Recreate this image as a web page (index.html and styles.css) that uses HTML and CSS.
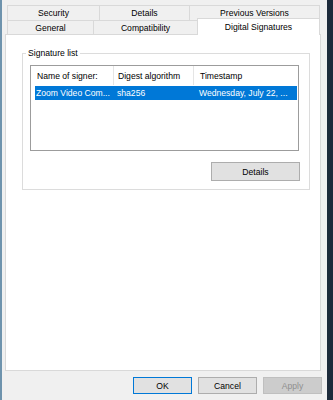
FILE: index.html
```html
<!DOCTYPE html>
<html lang="en">
<head>
    <meta charset="UTF-8">
    <meta name="viewport" content="width=device-width, initial-scale=1.0">
    <title>Properties</title>
    <link rel="stylesheet" href="styles.css">
</head>
<body>

<div class="window">
    <div class="edge"></div>

    <div class="dialog">
        <div class="tabs">
            <div class="tab-row back">
                <div class="tab w-security">Security</div>
                <div class="tab w-details">Details</div>
                <div class="tab grow">Previous Versions</div>
            </div>
            <div class="tab-row front">
                <div class="tab w-general">General</div>
                <div class="tab w-compat">Compatibility</div>
                <div class="tab grow selected">Digital Signatures</div>
            </div>
        </div>

        <div class="panel">
            <fieldset class="group">
                <legend>Signature list</legend>

                <div class="list">
                    <div class="list-header">
                        <div class="col col-name">Name of signer:</div>
                        <div class="col col-digest">Digest algorithm</div>
                        <div class="col col-time">Timestamp</div>
                    </div>
                    <div class="list-row selected">
                        <div class="cell cell-name">Zoom Video Com...</div>
                        <div class="cell cell-digest">sha256</div>
                        <div class="cell cell-time">Wednesday, July 22, ...</div>
                    </div>
                </div>

                <div class="group-actions">
                    <button class="btn btn-details">Details</button>
                </div>
            </fieldset>
        </div>

        <div class="buttons">
            <button class="btn default">OK</button>
            <button class="btn">Cancel</button>
            <button class="btn disabled">Apply</button>
        </div>
    </div>

    <div class="frame"></div>
</div>

</body>
</html>
```

FILE: styles.css
```css
* {
    box-sizing: border-box;
}

body {
    margin: 0;
    font-family: "Liberation Sans", Arial, sans-serif;
    font-size: 8.6px;
    color: #000;
    background-color: #f0f0f0;
}

.window {
    display: flex;
    height: 400px;
}

.edge {
    width: 2px;
    background-color: #6e93ad;
}

.frame {
    width: 6px;
    background-color: #1d2b3b;
}

.dialog {
    flex: 1;
    display: flex;
    flex-direction: column;
    padding: 5px 6px 6px 3px;
}

/* tabs */
.tabs {
    margin: 0 1px 0 2px;
}

.tab-row {
    display: flex;
}

.tab {
    display: flex;
    align-items: center;
    justify-content: center;
    border: 1px solid #d9d9d9;
    border-bottom: none;
    margin-left: -1px;
    white-space: nowrap;
}

.tab:first-child {
    margin-left: 0;
}

.tab.grow {
    flex: 1;
}

.back .tab {
    height: 15px;
}

.front .tab {
    height: 14px;
}

.w-security { width: 93px; }
.w-details { width: 91px; }
.w-general { width: 87px; }
.w-compat { width: 105px; }

.front .tab.selected {
    background-color: #fff;
    height: 17px;
    margin-top: -2px;
    margin-bottom: -1px;
    position: relative;
    z-index: 1;
}

/* page */
.panel {
    flex: 1;
    background-color: #fff;
    border: 1px solid #d9d9d9;
    padding: 13px 10px 0 16px;
}

.group {
    margin: 0;
    min-width: 0;
    border: 1px solid #dcdcdc;
    padding: 7px 10px 8px 7px;
}

.group legend {
    padding: 0 2px;
    margin-left: -4px;
    line-height: 10px;
}

.list {
    height: 86px;
    border: 1px solid #9c9c9c;
    background-color: #fff;
}

.list-header {
    display: flex;
    height: 19px;
}

.col {
    display: flex;
    align-items: center;
    white-space: nowrap;
}

.col-name {
    width: 83px;
    padding-left: 6px;
    border-right: 1px solid #e5e5e5;
}

.col-digest {
    width: 80px;
    padding-left: 4px;
    border-right: 1px solid #e5e5e5;
}

.col-time {
    flex: 1;
    padding-left: 6px;
}

.list-row {
    display: flex;
    height: 14px;
    margin: 1px 1px 0 4px;
    line-height: 14px;
    white-space: nowrap;
}

.list-row.selected {
    background-color: #0078d7;
    color: #fff;
}

.cell-name {
    width: 78px;
    padding-left: 1px;
}

.cell-digest {
    width: 80px;
    padding-left: 4px;
}

.cell-time {
    flex: 1;
    padding-left: 6px;
}

.group-actions {
    display: flex;
    justify-content: flex-end;
    margin: 11px -1px 0 0;
}

/* buttons */
.btn {
    font-family: inherit;
    font-size: inherit;
    color: #000;
    background-color: #e1e1e1;
    border: 1px solid #adadad;
    padding: 0;
    width: 59px;
    height: 17px;
}

.btn-details {
    width: 89px;
    height: 19px;
}

.btn.default {
    border-color: #0078d7;
}

.btn.disabled {
    background-color: #cccccc;
    border-color: #bfbfbf;
    color: #8f8f8f;
}

.buttons {
    display: flex;
    justify-content: flex-end;
    gap: 6px;
    margin: 6px -1px 0 0;
}
```
